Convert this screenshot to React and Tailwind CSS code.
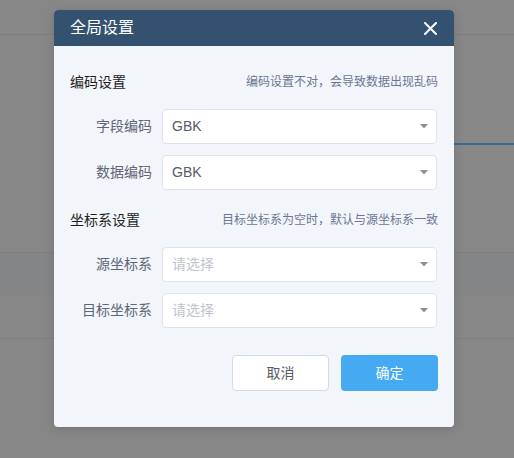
import React from 'react';

const font = { fontFamily: '"Liberation Sans", "Noto Sans CJK SC", sans-serif' };

const Arrow = () => (
  <svg width="8" height="5" viewBox="0 0 8 5" className="text-[#8a8f99]">
    <path d="M0 0 L8 0 L4 4.5 Z" fill="currentColor" />
  </svg>
);

const SelectRow = ({ label, value, className = '' }) => (
  <div className={`flex items-center ${className}`}>
    <div className="w-[92px] pr-[10px] text-right text-[14px] text-[#5f6677]">{label}</div>
    <div className="flex h-[35px] w-[275px] items-center justify-between rounded-[4px] border border-[#dfe3ea] bg-white pl-[9px] pr-[8px]">
      <span className={`text-[14px] ${value ? 'text-[#555a66]' : 'text-[#c0c4cc]'}`}>
        {value || '请选择'}
      </span>
      <Arrow />
    </div>
  </div>
);

const SectionTitle = ({ title, hint, className = '' }) => (
  <div className={`flex h-[20px] items-center justify-between ${className}`}>
    <span className="text-[14px] text-[#1f1f1f]">{title}</span>
    <span className="text-[12px] text-[#6b7794]">{hint}</span>
  </div>
);

export default function App() {
  return (
    <div className="relative h-[458px] w-[514px] overflow-hidden bg-[#878787]" style={font}>
      {/* page behind the overlay */}
      <div className="h-[35px] border-b border-[#7e7e7e]" />
      <div className="mt-[108px] flex justify-end">
        <div className="h-[2px] w-[90px] bg-[#3e6790]" />
      </div>
      <div className="mt-[107px] h-[43px] border-t border-[#7f7f7f] bg-[#848586]" />
      <div className="mt-[43px] border-t border-[#7f7f7f]" />

      {/* dialog */}
      <div className="absolute left-[54px] top-[10px] w-[400px] overflow-hidden rounded-[4px] bg-[#f2f5f9] shadow-[0_2px_10px_rgba(0,0,0,0.15)]">
        <div className="flex h-[36px] items-center justify-between bg-[#34526f] pl-[16px] pr-[17px]">
          <span className="text-[16px] text-white">全局设置</span>
          <svg width="13" height="13" viewBox="0 0 13 13">
            <path d="M1 1 L12 12 M12 1 L1 12" stroke="white" strokeWidth="2" strokeLinecap="round" />
          </svg>
        </div>

        <div className="px-[16px] pt-[26px] pb-[36px]">
          <SectionTitle title="编码设置" hint="编码设置不对，会导致数据出现乱码" />
          <SelectRow label="字段编码" value="GBK" className="mt-[17px]" />
          <SelectRow label="数据编码" value="GBK" className="mt-[11px]" />

          <SectionTitle title="坐标系设置" hint="目标坐标系为空时，默认与源坐标系一致" className="mt-[20px]" />
          <SelectRow label="源坐标系" className="mt-[17px]" />
          <SelectRow label="目标坐标系" className="mt-[11px]" />

          <div className="mt-[27px] flex justify-end gap-[12px]">
            <button className="h-[36px] w-[97px] rounded-[4px] border border-[#d3dae6] bg-white text-[14px] text-[#555a66]">
              取消
            </button>
            <button className="h-[36px] w-[97px] rounded-[4px] bg-[#45aaf2] text-[14px] text-white">
              确定
            </button>
          </div>
        </div>
      </div>
    </div>
  );
}
